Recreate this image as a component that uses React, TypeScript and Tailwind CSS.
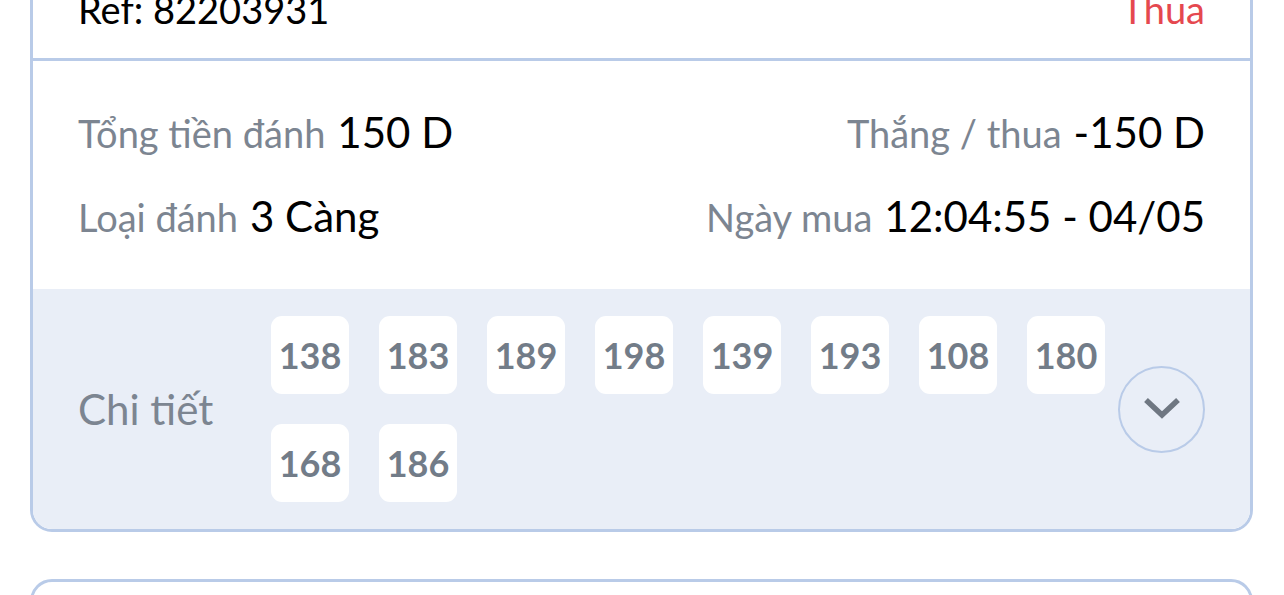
import React from "react";

const nums1 = ["138", "183", "189", "198", "139", "193", "108", "180", "168", "186"];

function Row({ l1, v1, l2, v2 }: { l1: string; v1: string; l2: string; v2: string }) {
  return (
    <div className="flex items-baseline justify-between h-[50px] leading-[50px]">
      <div className="flex items-baseline gap-[12px]">
        <span className="text-[38px] text-[#7c8591]">{l1}</span>
        <span className="text-[42px] text-black">{v1}</span>
      </div>
      <div className="flex items-baseline gap-[12px]">
        <span className="text-[38px] text-[#7c8591]">{l2}</span>
        <span className="text-[42px] text-black">{v2}</span>
      </div>
    </div>
  );
}

export default function App() {
  return (
    <div
      className="w-[1284px] h-[595px] overflow-hidden bg-white"
      style={{ fontFamily: "Lato, 'Noto Sans', sans-serif" }}
    >
      <div className="ml-[30px] w-[1223px] -mt-[37px] rounded-[22px] border-[3px] border-[#b9cbe8] overflow-hidden">
        <div className="h-[95px] px-[45px] flex items-end justify-between pb-[30px] border-b-[3px] border-[#b9cbe8]">
          <span className="text-[38px] leading-none text-black">Ref: 82203931</span>
          <span className="text-[38px] leading-none text-[#e5484f]">Thua</span>
        </div>
        <div className="px-[45px] pt-[46px] pb-[48px] flex flex-col gap-[34px]">
          <Row l1="Tổng tiền đánh" v1="150 D" l2="Thắng / thua" v2="-150 D" />
          <Row l1="Loại đánh" v1="3 Càng" l2="Ngày mua" v2="12:04:55 - 04/05" />
        </div>
        <div className="bg-[#e9eef7] px-[45px] py-[27px] flex items-center">
          <div className="w-[193px] shrink-0 text-[42px] text-[#7c8591]">Chi tiết</div>
          <div className="flex-1 flex flex-wrap gap-[30px]">
            {nums1.map((n) => (
              <div
                key={n}
                className="w-[78px] h-[78px] rounded-[11px] bg-white flex items-center justify-center text-[36px] font-bold text-[#727c88]"
              >
                {n}
              </div>
            ))}
          </div>
          <div className="w-[87px] h-[87px] shrink-0 rounded-full border-[2px] border-[#b9cbe8] flex items-center justify-center">
            <svg width="44" height="30" viewBox="0 0 44 30" fill="none">
              <path d="M6 6 L22 21 L38 6" stroke="#6f7782" strokeWidth="5.5" />
            </svg>
          </div>
        </div>
      </div>
      <div className="ml-[30px] w-[1223px] mt-[47px] h-[100px] rounded-[22px] border-[3px] border-[#b9cbe8]" />
    </div>
  );
}
